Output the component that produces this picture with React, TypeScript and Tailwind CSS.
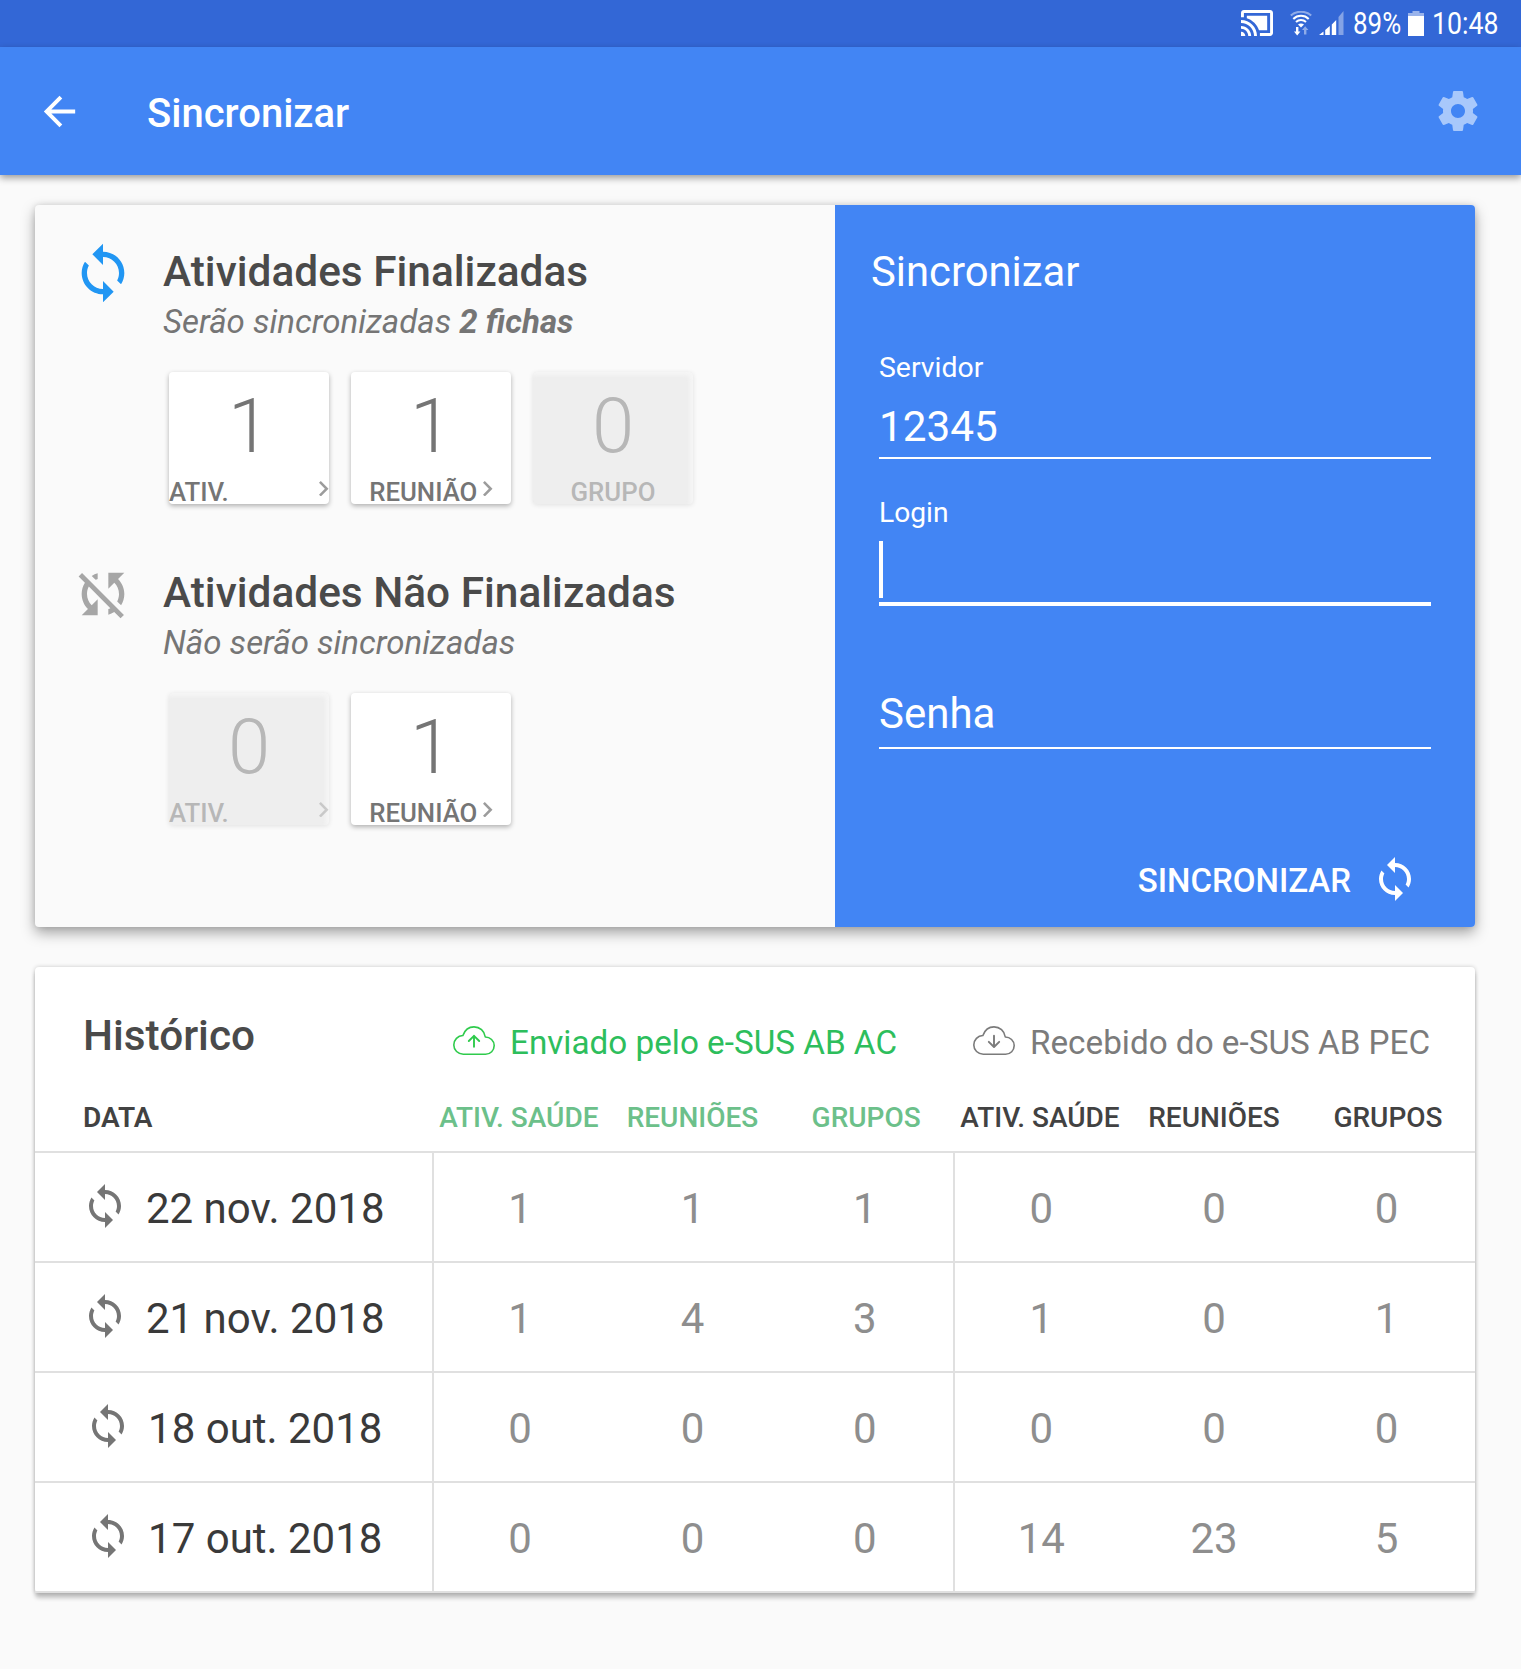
import type { ReactNode } from "react";

const SYNC_PATH =
  "M12 4V1L8 5l4 4V6c3.31 0 6 2.69 6 6 0 1.01-.25 1.97-.7 2.8l1.46 1.46C19.54 15.03 20 13.57 20 12c0-4.42-3.58-8-8-8zm0 14c-3.31 0-6-2.69-6-6 0-1.01.25-1.97.7-2.8L5.24 7.74C4.46 8.97 4 10.43 4 12c0 4.42 3.58 8 8 8v3l4-4-4-4v3z";

function SyncIcon({ className }: { className: string }) {
  return (
    <svg viewBox="0 0 24 24" fill="currentColor" className={className}>
      <path d={SYNC_PATH} />
    </svg>
  );
}

function SyncDisabledIcon({ className }: { className: string }) {
  return (
    <svg viewBox="0 0 24 24" fill="currentColor" className={className}>
      <path d="M10 6.35V4.26c-.8.21-1.55.54-2.23.96l1.46 1.46c.25-.12.5-.24.77-.33zm-7.14-.94l2.36 2.36C4.45 8.99 4 10.44 4 12c0 2.21.91 4.2 2.36 5.64L4 20h6v-6l-2.24 2.24C6.68 15.15 6 13.66 6 12c0-1 .25-1.94.68-2.77l8.08 8.08c-.25.13-.5.25-.77.34v2.09c.8-.21 1.55-.54 2.23-.96l2.36 2.36 1.27-1.27L4.14 4.14 2.86 5.41zM20 4h-6v6l2.24-2.24C17.32 8.85 18 10.34 18 12c0 1-.25 1.94-.68 2.77l1.46 1.46C19.55 15.01 20 13.56 20 12c0-2.21-.91-4.2-2.36-5.64L20 4z" />
    </svg>
  );
}

function Chevron() {
  return (
    <svg viewBox="8.59 6 7.41 12" fill="#9c9c9c" className="mt-[0.5px] h-[15.5px] w-[9.5px] shrink-0">
      <path d="M10 6L8.59 7.41 13.17 12l-4.58 4.59L10 18l6-6z" />
    </svg>
  );
}

function CloudIcon({ direction, className }: { direction: "up" | "down"; className: string }) {
  return (
    <svg
      viewBox="0 0 42 29"
      fill="none"
      stroke="currentColor"
      strokeWidth="1.6"
      strokeLinecap="round"
      strokeLinejoin="round"
      className={className}
    >
      <path d="M10.300 28.200C5 28.200.800 24 .800 19C.800 13.800 4.800 9.700 9.900 9.500C11.700 4.400 15.900.900 21 .900C26.800.900 31.500 5 32.300 11C37.200 11 41.200 14.800 41.200 19.600C41.200 24.400 37.400 28.200 32.600 28.200Z" />
      <path strokeWidth="1.900" d={direction === "up" ? "M21 20.800V9.800M15.800 15L21 9.800L26.200 15" : "M21 9.800V20.800M15.800 15.800L21 21L26.200 15.800"} />
    </svg>
  );
}

function StatusBar() {
  return (
    <div className="flex h-[47px] items-start justify-end bg-[#3367d6] pr-[22px] text-white">
      <svg viewBox="1 3 22 18" fill="currentColor" className="mt-[10px] h-[26px] w-[32px]" preserveAspectRatio="none">
        <path d="M1 18v3h3c0-1.66-1.34-3-3-3zm0-4v2c2.76 0 5 2.24 5 5h2c0-3.87-3.13-7-7-7zm18-7H5v1.63c3.96 1.28 7.09 4.41 8.37 8.37H19V7zM1 10v2c4.97 0 9 4.03 9 9h2c0-6.08-4.93-11-11-11zm20-7H3c-1.1 0-2 .9-2 2v3h2V5h18v14h-7v2h7c1.1 0 2-.9 2-2V5c0-1.1-.9-2-2-2z" />
      </svg>
      <svg viewBox="0 0 22 25" fill="none" stroke="currentColor" strokeWidth="2" className="mt-[11px] ml-[17px] h-[25px] w-[22px]">
        <path opacity=".45" d="M.8 4.6C6.5-.6 15.500-.6 21.200 4.600" />
        <path d="M3.300 8C7.500 3.800 14.500 3.800 18.700 8" />
        <path d="M6 11C8.800 8.300 13.200 8.300 16 11" />
        <path fill="currentColor" stroke="none" d="M8 13.500C9.500 12 12.500 12 14 13.500L11 16.500Z" />
        <path fill="currentColor" stroke="none" d="M6 16h2.400v4.500h2L7.200 24.500L4 20.500h2Z" />
        <path fill="currentColor" stroke="none" opacity=".45" d="M14 23.500h2.400V19h2L15.200 15.200L12 19h2Z" />
      </svg>
      <svg viewBox="0 0 25 25" fill="currentColor" className="mt-[11px] ml-[7px] h-[25px] w-[25px]">
        <path d="M0 24L4.500 20.500V24ZM6.200 19L10.800 15V24H6.200ZM12.800 13.500L17.200 9V24H12.800Z" />
        <path opacity=".4" d="M19.500 6L24.500 0V24H19.500Z" />
      </svg>
      <span className="ml-[9px] w-[48px] pt-[4px] text-[30.5px] leading-[40px]">
        <span className="inline-block origin-left scale-x-[0.85]">89%</span>
      </span>
      <svg viewBox="0 0 16 25" fill="currentColor" className="mt-[11px] ml-[7px] h-[25px] w-[16px]">
        <path opacity=".5" d="M4.500 0H11.500V2H16V5H0V2H4.500Z" />
        <path d="M0 5H16V25H0Z" />
      </svg>
      <span className="ml-[8px] w-[67px] pt-[4px] text-[30.5px] leading-[40px]">
        <span className="inline-block origin-left scale-x-[0.875]">10:48</span>
      </span>
    </div>
  );
}

function AppBar() {
  return (
    <header className="relative flex h-[128px] items-center bg-[#4285f4] pr-[39px] pl-[35.5px] text-white shadow-[0_3px_7px_rgba(0,0,0,0.38)]">
      <svg viewBox="0 0 24 24" fill="currentColor" className="size-[47px]">
        <path d="M20 11H7.83l5.59-5.59L12 4l-8 8 8 8 1.410-1.410L7.830 13H20v-2z" />
      </svg>
      <h1 className="mt-[5px] ml-[64.5px] text-[40px] leading-[50px] font-medium">Sincronizar</h1>
      <svg viewBox="0 0 24 24" fill="currentColor" className="ml-auto size-[48px] text-[#a8c8fb]">
        <path d="M19.430 12.980c.04-.32.07-.64.07-.98s-.03-.66-.07-.98l2.110-1.650c.19-.15.24-.42.12-.64l-2-3.460c-.12-.22-.39-.3-.61-.22l-2.490 1c-.52-.4-1.080-.73-1.690-.98l-.38-2.650C14.460 2.180 14.250 2 14 2h-4c-.25 0-.46.18-.49.42l-.38 2.650c-.61.25-1.170.59-1.690.98l-2.490-1c-.23-.09-.49 0-.61.22l-2 3.460c-.13.22-.07.49.12.64l2.110 1.650c-.04.32-.07.65-.07.98s.03.66.07.98l-2.110 1.650c-.19.15-.24.42-.12.64l2 3.460c.12.22.39.3.61.22l2.490-1c.52.4 1.080.73 1.690.98l.38 2.650c.03.24.24.42.49.42h4c.25 0 .46-.18.49-.42l.38-2.650c.61-.25 1.170-.59 1.690-.98l2.490 1c.23.09.49 0 .61-.22l2-3.460c.12-.22.07-.49-.12-.64l-2.110-1.650zM12 15.500c-1.930 0-3.500-1.570-3.500-3.500s1.570-3.500 3.500-3.500 3.500 1.570 3.500 3.500-1.570 3.500-3.500 3.500z" />
      </svg>
    </header>
  );
}

type Tile = { value: string; label: string; disabled?: boolean; chevron?: boolean; spread?: boolean };

function CountTile({ value, label, disabled, chevron, spread }: Tile) {
  return (
    <div
      className={
        disabled
          ? "h-[132px] w-[160px] rounded-[4px] bg-[#eeeeee] shadow-[0_1px_5px_rgba(0,0,0,0.1),inset_-3px_3px_4px_rgba(250,250,250,0.7)]"
          : "h-[132px] w-[160px] rounded-[4px] bg-white shadow-[0_2px_5px_rgba(0,0,0,0.3)]"
      }
    >
      <div className={disabled ? "opacity-45" : ""}>
        <div className="text-center text-[76px] leading-[108px] font-light text-[#757575]">{value}</div>
        <div className={spread ? "flex items-start justify-between pr-[0.5px]" : "flex items-start justify-center gap-[6px]"}>
          <span className="text-[25.8px] leading-[24px] font-medium text-[#757575]">{label}</span>
          {chevron && <Chevron />}
        </div>
      </div>
    </div>
  );
}

function ActivitySection({ icon, title, subtitle, tiles }: { icon: ReactNode; title: string; subtitle: ReactNode; tiles: Tile[] }) {
  return (
    <section className="flex gap-[28px]">
      {icon}
      <div className="pt-[6px]">
        <h2 className="text-[42.4px] leading-[50px] font-medium text-[#4a4a4a]">{title}</h2>
        <p className="text-[33px] leading-[50px] text-[#757575] italic">{subtitle}</p>
        <div className="mt-[25px] ml-[6px] flex gap-[22px]">
          {tiles.map((tile) => (
            <CountTile key={tile.label} {...tile} />
          ))}
        </div>
      </div>
    </section>
  );
}

function SyncForm() {
  return (
    <div className="flex w-[640px] flex-col rounded-r-[4px] bg-[#4285f4] pt-[42px] pb-[23px] text-white">
      <h2 className="pl-[36px] text-[41.8px] leading-[50px]">Sincronizar</h2>
      <div className="mt-[54px] ml-[44px] w-[552px]">
        <div className="text-[28.4px] leading-[34px]">Servidor</div>
        <div className="mt-[10px] border-b-2 border-white pt-[2px] text-[42.3px] leading-[60px]">12345</div>
        <div className="mt-[37px] text-[28.2px] leading-[34px]">Login</div>
        <div className="mt-[11px] border-b-4 border-white pb-[4px]">
          <div className="h-[57px] w-[4px] bg-white" />
        </div>
        <div className="mt-[75px] border-b-2 border-white text-[42px] leading-[66px]">Senha</div>
      </div>
      <button className="mt-auto mr-[56px] flex items-center justify-end gap-[20px] text-[33px] leading-[46px] font-medium">
        <span className="pt-[4px]">SINCRONIZAR</span>
        <SyncIcon className="size-[48px]" />
      </button>
    </div>
  );
}

const HISTORY = [
  { date: "22 nov. 2018", sent: [1, 1, 1], received: [0, 0, 0] },
  { date: "21 nov. 2018", sent: [1, 4, 3], received: [1, 0, 1] },
  { date: "18 out. 2018", sent: [0, 0, 0], received: [0, 0, 0] },
  { date: "17 out. 2018", sent: [0, 0, 0], received: [14, 23, 5] },
];
const COLUMNS = ["ATIV. SAÚDE", "REUNIÕES", "GRUPOS"];

function HeaderCells({ className }: { className: string }) {
  return (
    <div className={className}>
      {COLUMNS.map((column) => (
        <span key={column}>{column}</span>
      ))}
    </div>
  );
}

function ValueCells({ values }: { values: number[] }) {
  return (
    <div className="grid grid-cols-3 items-center border-l-2 border-[#e0e0e0] pt-[3px] pr-[2px] text-center text-[42px] text-[#8e8e8e]">
      {values.map((value, index) => (
        <span key={index}>{value}</span>
      ))}
    </div>
  );
}

function HistoryCard() {
  return (
    <section className="mt-[40px] w-[1440px] rounded-[4px] bg-white pt-[44px] shadow-[0_5px_4px_rgba(0,0,0,0.22),0_0_4px_rgba(0,0,0,0.2)]">
      <div className="grid h-[64px] grid-cols-[397px_521px_522px]">
        <h2 className="pl-[48px] text-[42.300px] leading-[50px] font-medium text-[#4a4a4a]">Histórico</h2>
        <div className="flex gap-[15px] pl-[21px] text-[33.250px] leading-[64px] whitespace-nowrap text-[#2dbe5c]">
          <CloudIcon direction="up" className="mt-[15px] h-[29px] w-[42px] text-[#2fcb4c]" />
          Enviado pelo e-SUS AB AC
        </div>
        <div className="flex gap-[15px] pl-[20px] text-[33.250px] leading-[64px] whitespace-nowrap text-[#7b7b7b]">
          <CloudIcon direction="down" className="mt-[15px] h-[29px] w-[42px]" />
          Recebido do e-SUS AB PEC
        </div>
      </div>
      <div className="grid grid-cols-[397px_521px_522px] border-b-2 border-[#e0e0e0] pt-[26px] pb-[16px] text-[28px] leading-[34px] font-medium text-[#424242]">
        <span className="pl-[48px] font-semibold">DATA</span>
        <HeaderCells className="grid grid-cols-3 text-center whitespace-nowrap text-[#6cc08a]" />
        <HeaderCells className="grid grid-cols-3 text-center whitespace-nowrap" />
      </div>
      {HISTORY.map((row) => (
        <div key={row.date} className="grid h-[110px] grid-cols-[397px_521px_522px] border-b-2 border-[#e0e0e0]">
          <div className="flex items-center justify-center gap-[16.5px] pr-[1px]">
            <SyncIcon className="mb-[2px] size-[48px] text-[#757575]" />
            <span className="pt-[3px] text-[42px] text-[#3a3a3a]">{row.date}</span>
          </div>
          <ValueCells values={row.sent} />
          <ValueCells values={row.received} />
        </div>
      ))}
    </section>
  );
}

export default function App() {
  return (
    <div className="h-[1669px] w-[1521px] overflow-hidden bg-[#fafafa] font-['Roboto',sans-serif]">
      <StatusBar />
      <AppBar />
      <main className="pt-[30px] pl-[35px]">
        <div className="flex h-[722px] w-[1440px] rounded-[4px] bg-[#fafafa] shadow-[0_6px_14px_rgba(0,0,0,0.34),0_0_6px_rgba(0,0,0,0.12)]">
          <div className="flex w-[800px] flex-col gap-[58px] pt-[36px] pl-[36px]">
            <ActivitySection
              icon={<SyncIcon className="size-[64px] text-[#2196f3]" />}
              title="Atividades Finalizadas"
              subtitle={
                <>
                  Serão sincronizadas <b className="font-bold">2 fichas</b>
                </>
              }
              tiles={[
                { value: "1", label: "ATIV.", chevron: true, spread: true },
                { value: "1", label: "REUNIÃO", chevron: true },
                { value: "0", label: "GRUPO", disabled: true },
              ]}
            />
            <ActivitySection
              icon={<SyncDisabledIcon className="size-[64px] text-[#a6a6a6]" />}
              title="Atividades Não Finalizadas"
              subtitle="Não serão sincronizadas"
              tiles={[
                { value: "0", label: "ATIV.", disabled: true, chevron: true, spread: true },
                { value: "1", label: "REUNIÃO", chevron: true },
              ]}
            />
          </div>
          <SyncForm />
        </div>
        <HistoryCard />
      </main>
    </div>
  );
}
